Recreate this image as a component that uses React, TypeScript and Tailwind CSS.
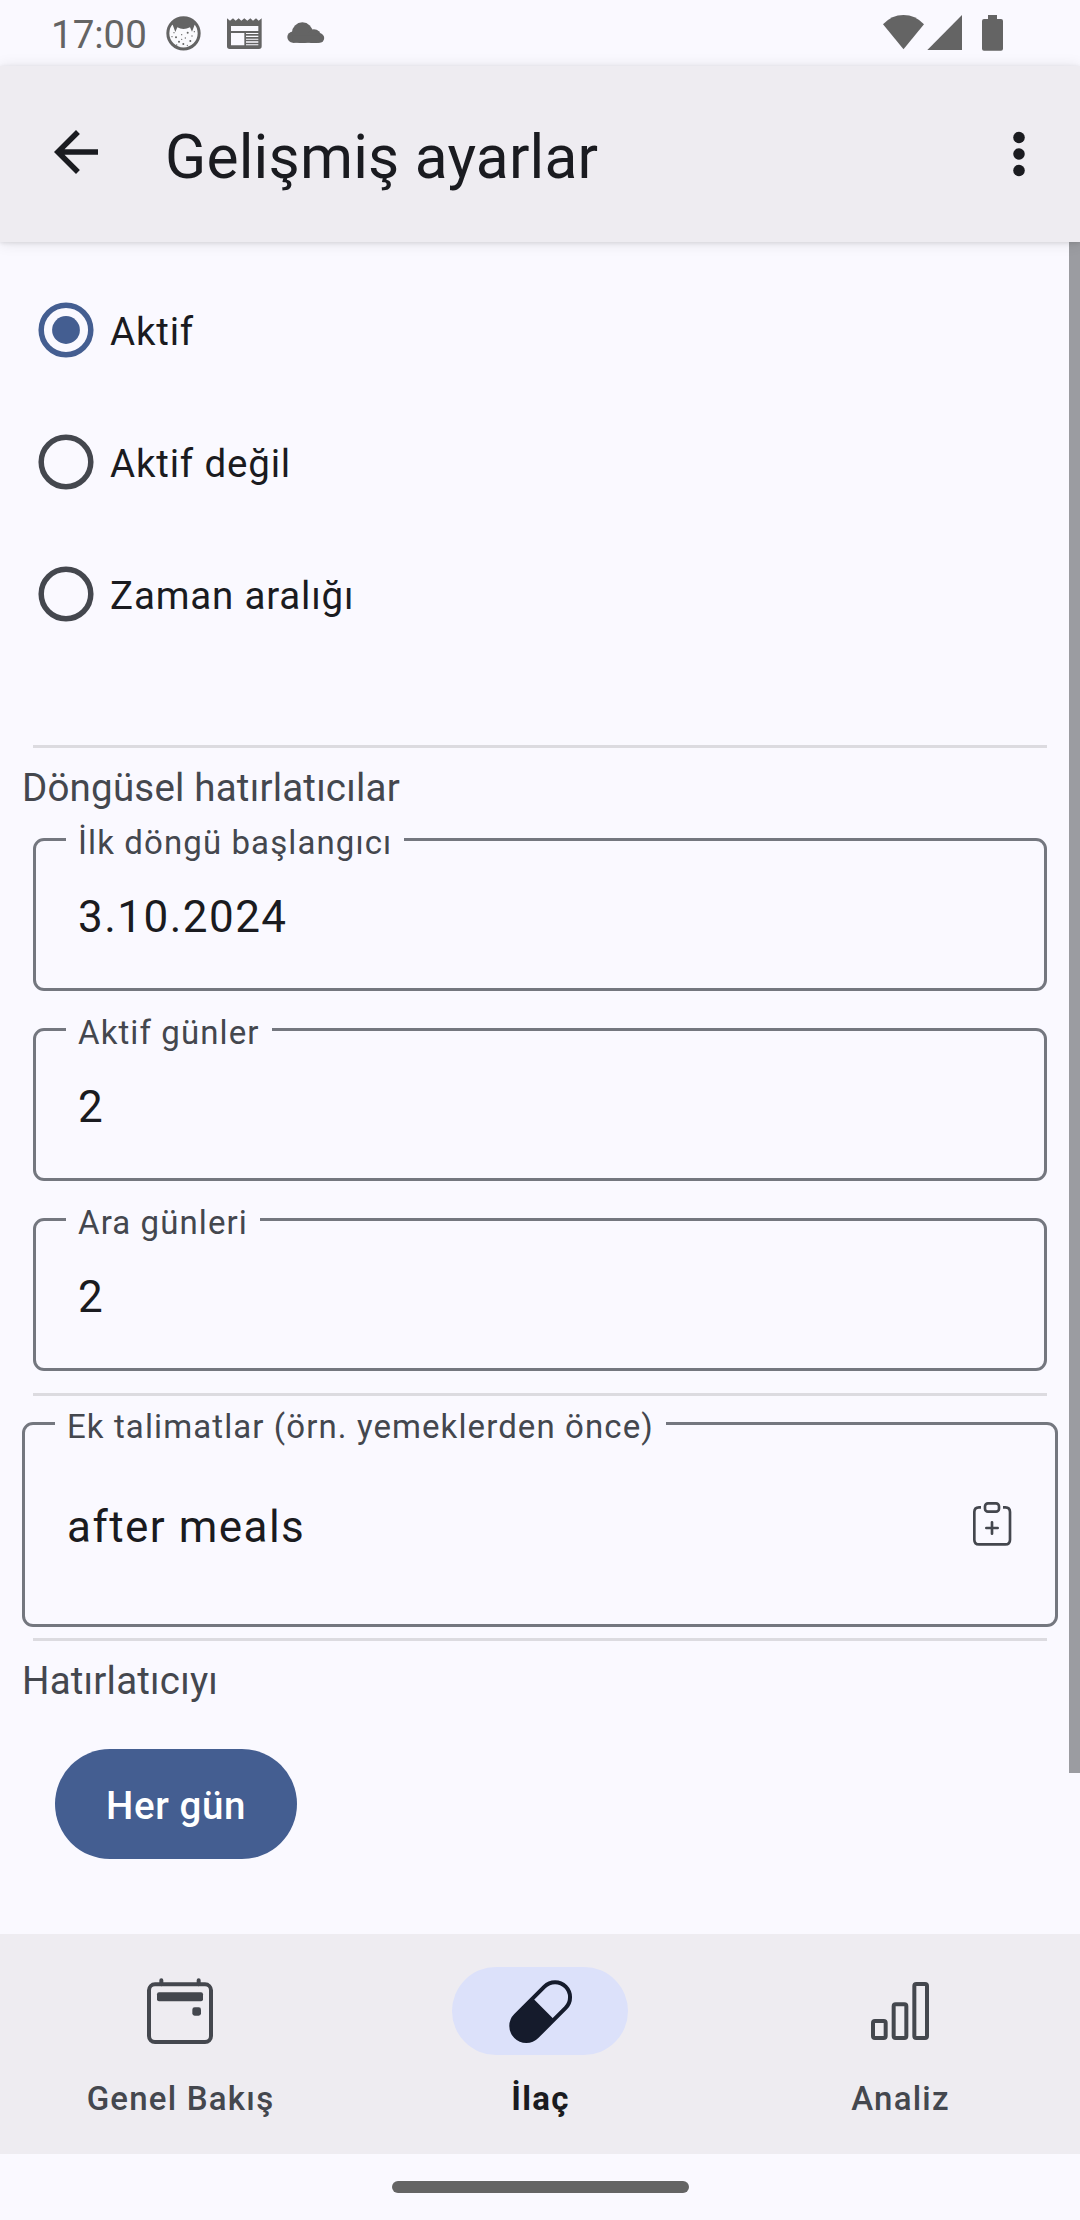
import type { ReactNode } from "react";

function CatIcon() {
  const dots = [
    [528, 112, 3], [545, 104, 2], [563, 98, 3], [576, 108, 2], [537, 125, 3], [556, 114, 2],
    [571, 123, 3], [550, 132, 3], [522, 98, 2], [583, 95, 2], [562, 136, 2], [530, 135, 2], [516, 110, 2], [545, 118, 2],
  ];
  return (
    <svg viewBox="498 48 105 105" className="h-[35px] w-[35px]">
      <circle cx="550.5" cy="100" r="47" fill="#fafafd" stroke="#646464" strokeWidth="9" />
      <path
        d="M508 76 Q526 52 550 52 Q576 52 594 76 L584 74 L576 95 L570 82 Q550 92 532 82 L526 96 L518 74 Z"
        fill="#646464"
      />
      {dots.map(([x, y, r], i) => (
        <circle key={i} cx={x} cy={y} r={r} fill="#646464" />
      ))}
    </svg>
  );
}

function NewsIcon() {
  return (
    <svg viewBox="681 54 105 93" className="h-[31px] w-[35px]">
      <path
        d="M681 55 L690 62 L699 55 L707 62 L716 55 L724 62 L733 55 L742 62 L751 55 L759 62 L768 55 L776 62 L785 55 V139 Q785 147 777 147 H689 Q681 147 681 139 Z"
        fill="#646464"
      />
      <path
        d="M693 78H775V93H693Z M693 99H733V136H693Z M738 99H775V102H738Z M738 107H775V111H738Z M738 116H775V119H738Z M738 124H775V128H738Z M738 133H775V136H738Z"
        fill="#faf9ff"
      />
    </svg>
  );
}

function CloudIcon() {
  return (
    <svg viewBox="860 64 114 64" className="h-[21px] w-[38px]" fill="#646464">
      <circle cx="877" cy="110" r="17" />
      <circle cx="906" cy="97" r="32" />
      <circle cx="941" cy="108" r="22" />
      <circle cx="958" cy="113" r="14.5" />
      <rect x="877" y="104" width="81" height="23.5" />
    </svg>
  );
}

function StatusBar() {
  return (
    <div className="flex h-[66px] items-start bg-[#faf9ff] pl-[51px] pr-[77px] text-[#646464]">
      <span className="mt-[12px] w-[115px] text-[38.5px] leading-[45px]">17:00</span>
      <div className="mt-[16px]">
        <CatIcon />
      </div>
      <div className="ml-[26px] mt-[18px]">
        <NewsIcon />
      </div>
      <div className="ml-[25px] mt-[22px]">
        <CloudIcon />
      </div>
      <svg viewBox="489 45 360 108" className="ml-auto mt-[15px] h-[36px] w-[120px]" fill="#646464">
        <path d="M489 73 Q515 45 550.500 45 Q586 45 612 73 L550.500 148 Z" />
        <path d="M726 45 V150 H622 Z" />
        <path d="M804 45H831V57H843Q849 57 849 63V146Q849 152 843 152H792Q786 152 786 146V63Q786 57 792 57H804Z" />
      </svg>
    </div>
  );
}

function AppBar() {
  return (
    <header className="relative z-10 flex h-[176px] items-center bg-[#eeecf1] pl-[43px] pr-[28px] text-[#1a1b20] shadow-[0_1px_4px_rgba(0,0,0,0.10),0_1px_14px_rgba(0,0,0,0.10)]">
      <svg viewBox="0 0 24 24" className="mb-[4px] h-[66px] w-[66px]" fill="currentColor">
        <path d="M20 11H7.83l5.59-5.59L12 4l-8 8 8 8 1.41-1.41L7.83 13H20v-2z" />
      </svg>
      <h1 className="ml-[56px] pt-[7px] text-[60.5px] leading-[72px] tracking-[0.2px]">Gelişmiş ayarlar</h1>
      <svg viewBox="0 0 24 24" className="ml-auto h-[66px] w-[66px]" fill="currentColor">
        <circle cx="12" cy="6" r="2.1" />
        <circle cx="12" cy="12" r="2.1" />
        <circle cx="12" cy="18" r="2.1" />
      </svg>
    </header>
  );
}

function Radio({ label, checked = false }: { label: string; checked?: boolean }) {
  return (
    <label className="flex h-[132px] items-center pl-[38px]">
      <svg viewBox="0 0 56 56" className="h-[56px] w-[56px]">
        <circle cx="28" cy="28" r="24.800" fill="none" strokeWidth="5.5" stroke={checked ? "#445e91" : "#44474e"} />
        {checked && <circle cx="28" cy="28" r="13.900" fill="#445e91" />}
      </svg>
      <span className="ml-[16px] pt-[3px] text-[38.5px] leading-[45px] tracking-[0.82px] text-[#1a1b20]">{label}</span>
    </label>
  );
}

function Divider({ className }: { className: string }) {
  return <div className={`mx-[33px] h-[3px] shrink-0 bg-[#dcdbe0] ${className}`} />;
}

function Field({ label, value, className, icon }: { label: string; value: string; className: string; icon?: ReactNode }) {
  return (
    <div className={`relative flex shrink-0 justify-between rounded-[11px] border-[3px] border-[#74777f] pl-[42px] ${className}`}>
      <span className="absolute left-[30px] top-[-17px] whitespace-nowrap bg-[#faf9ff] px-[12px] text-[33px] leading-[38px] tracking-[0.0333em] text-[#44474e]">
        {label}
      </span>
      <span className="text-[44px] leading-[52px] tracking-[0.0335em] text-[#1a1b20]">{value}</span>
      {icon}
    </div>
  );
}

function ClipboardIcon() {
  return (
    <svg viewBox="456 423 120 138" className="mr-[43px] h-[46px] w-[40px]" fill="none" stroke="#44474e" strokeWidth="8">
      <path d="M483 442H477Q463 442 463 456V539Q463 553 477 553H556Q570 553 570 539V456Q570 442 556 442H549" />
      <rect x="495" y="430" width="42" height="25" rx="9" />
      <path d="M516 487V521M499 504H533" strokeLinecap="round" />
    </svg>
  );
}

function NavItem({ label, icon, active = false }: { label: string; icon: ReactNode; active?: boolean }) {
  return (
    <div className="flex w-[360px] flex-col items-center pt-[33px]">
      <div className={`flex h-[88px] w-[176px] items-center justify-center rounded-full ${active ? "bg-[#dce1fa]" : ""}`}>{icon}</div>
      <span
        className={`mt-[25px] pl-[1px] text-[33px] leading-[38px] ${active ? "font-bold tracking-[0.0417em] text-[#1a1b20]" : "font-medium tracking-[0.037em] text-[#44474e]"}`}
      >
        {label}
      </span>
    </div>
  );
}

function BottomNav() {
  return (
    <nav className="flex h-[220px] shrink-0 bg-[#eeecf1]">
      <NavItem
        label="Genel Bakış"
        icon={
          <svg viewBox="441 773 198 198" className="h-[66px] w-[66px]" fill="#44474e">
            <rect x="447" y="792" width="186" height="173" rx="18" fill="none" stroke="#44474e" strokeWidth="12" />
            <path d="M484 780V792M596 780V792" stroke="#44474e" strokeWidth="12" strokeLinecap="round" />
            <rect x="471" y="816" width="138" height="27" rx="6" />
            <rect x="577" y="861" width="26" height="25" rx="7" />
          </svg>
        }
      />
      <NavItem
        active
        label="İlaç"
        icon={
          <svg viewBox="321 174 198 198" className="h-[66px] w-[66px]">
            <g transform="translate(422 275) rotate(-45)">
              <rect x="-106" y="-45" width="212" height="90" rx="45" fill="none" stroke="#151b2c" strokeWidth="12" />
              <path d="M12 -46H-61A46 46 0 0 0 -61 46H12Z" fill="#151b2c" />
            </g>
          </svg>
        }
      />
      <NavItem
        label="Analiz"
        icon={
          <svg viewBox="201 174 198 198" className="h-[66px] w-[66px]" fill="none" stroke="#44474e" strokeWidth="12">
            <rect x="219" y="303" width="38" height="51" rx="6" />
            <rect x="281" y="253" width="38" height="101" rx="6" />
            <rect x="343" y="192" width="38" height="162" rx="6" />
          </svg>
        }
      />
    </nav>
  );
}

export default function App() {
  return (
    <div className="flex h-[2220px] w-[1080px] flex-col overflow-hidden bg-[#faf9ff] font-[Roboto,sans-serif]">
      <StatusBar />
      <AppBar />
      <main className="relative flex h-[1692px] shrink-0 flex-col">
        <div className="mt-[22px]">
          <Radio label="Aktif" checked />
          <Radio label="Aktif değil" />
          <Radio label="Zaman aralığı" />
        </div>
        <Divider className="mt-[85px]" />
        <h2 className="ml-[22px] mt-[17px] text-[38.5px] leading-[45px] tracking-[0.2px] text-[#44474e]">Döngüsel hatırlatıcılar</h2>
        <div className="mx-[33px] mt-[28px] flex flex-col gap-[37px]">
          <Field label="İlk döngü başlangıcı" value="3.10.2024" className="h-[153px] pt-[50px]" />
          <Field label="Aktif günler" value="2" className="h-[153px] pt-[50px]" />
          <Field label="Ara günleri" value="2" className="h-[153px] pt-[50px]" />
        </div>
        <Divider className="mt-[22px]" />
        <Field
          label="Ek talimatlar (örn. yemeklerden önce)"
          value="after meals"
          className="mx-[22px] mt-[26px] h-[205px] pt-[76px]"
          icon={<ClipboardIcon />}
        />
        <Divider className="mt-[11px]" />
        <h2 className="ml-[22px] mt-[17px] text-[38.5px] leading-[45px] tracking-[0.2px] text-[#44474e]">Hatırlatıcıyı</h2>
        <button className="ml-[55px] mt-[46px] flex h-[110px] w-[242px] items-center justify-center rounded-full bg-[#445e91] pt-[3px] text-[38.5px] font-medium leading-[45px] tracking-[0.6px] text-white">
          Her gün
        </button>
        <div className="absolute right-0 top-0 h-[1531px] w-[11px] bg-[#9b9ca1]" />
      </main>
      <BottomNav />
      <div className="flex h-[66px] justify-center pt-[27px]">
        <div className="h-[12px] w-[297px] rounded-full bg-[#646464]" />
      </div>
    </div>
  );
}
